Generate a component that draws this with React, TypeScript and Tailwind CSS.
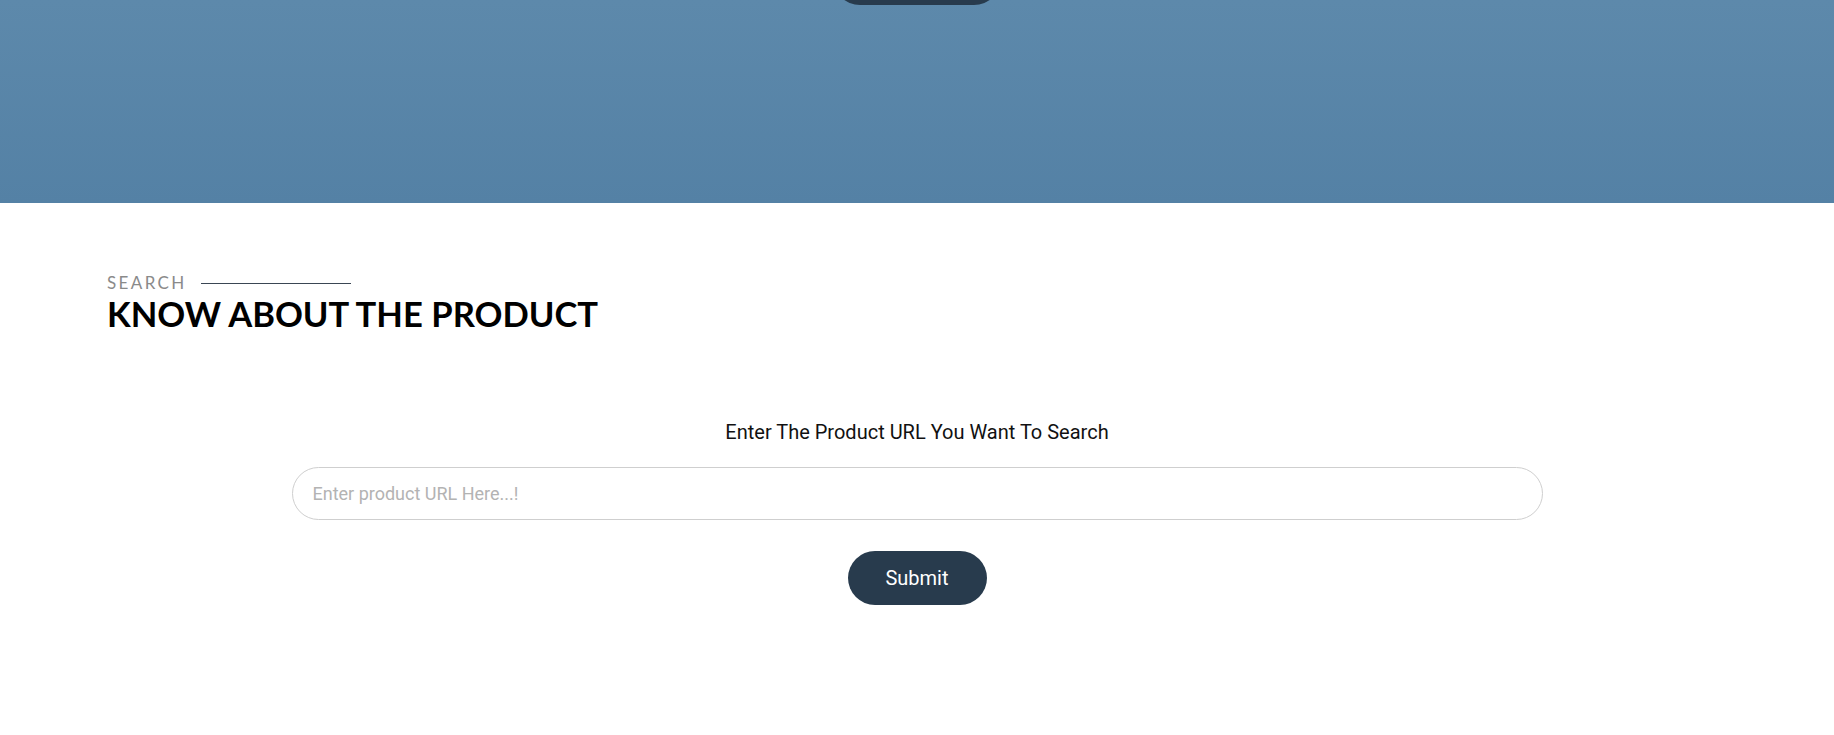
import { useState } from "react";

const App = () => {
  const [url, setUrl] = useState("");

  return (
    <div className="min-h-[735px] w-full bg-white font-['Roboto',sans-serif]">
      {/* Hero tail */}
      <section className="flex h-[203px] justify-center overflow-hidden bg-gradient-to-b from-[#5d89ab] to-[#5481a5]">
        <div className="mt-[-49px] h-[54px] w-[168px] rounded-full bg-[#283b4d]" />
      </section>

      {/* Search section */}
      <section className="px-[107px] pt-[70px] pb-[120px]">
        <div className="flex items-center gap-[14px]">
          <span className="font-['Lato',sans-serif] text-[17px] leading-[20px] tracking-[0.14em] text-[#8a8a8a]">
            SEARCH
          </span>
          <span className="h-px w-[150px] bg-[#3a4654]" />
        </div>
        <h2 className="mt-[1px] font-['Lato',sans-serif] text-[34.6px] font-bold leading-[40px] text-black">
          KNOW ABOUT THE PRODUCT
        </h2>

        <div className="mt-[86px] flex flex-col items-center">
          <label className="text-[20px] leading-[24px] text-[#111]">
            Enter The Product URL You Want To Search
          </label>
          <input
            value={url}
            onChange={(e) => setUrl(e.target.value)}
            placeholder="Enter product URL Here...!"
            className="mt-[23px] h-[53px] w-[1251px] rounded-full border border-[#cfcfcf] px-[20px] text-[18px] text-[#333] outline-none placeholder:text-[#b3b3b3]"
          />
          <button className="mt-[31px] h-[54px] w-[139px] rounded-full bg-[#283b4d] text-[20px] text-white">
            Submit
          </button>
        </div>
      </section>
    </div>
  );
};

export default App;
